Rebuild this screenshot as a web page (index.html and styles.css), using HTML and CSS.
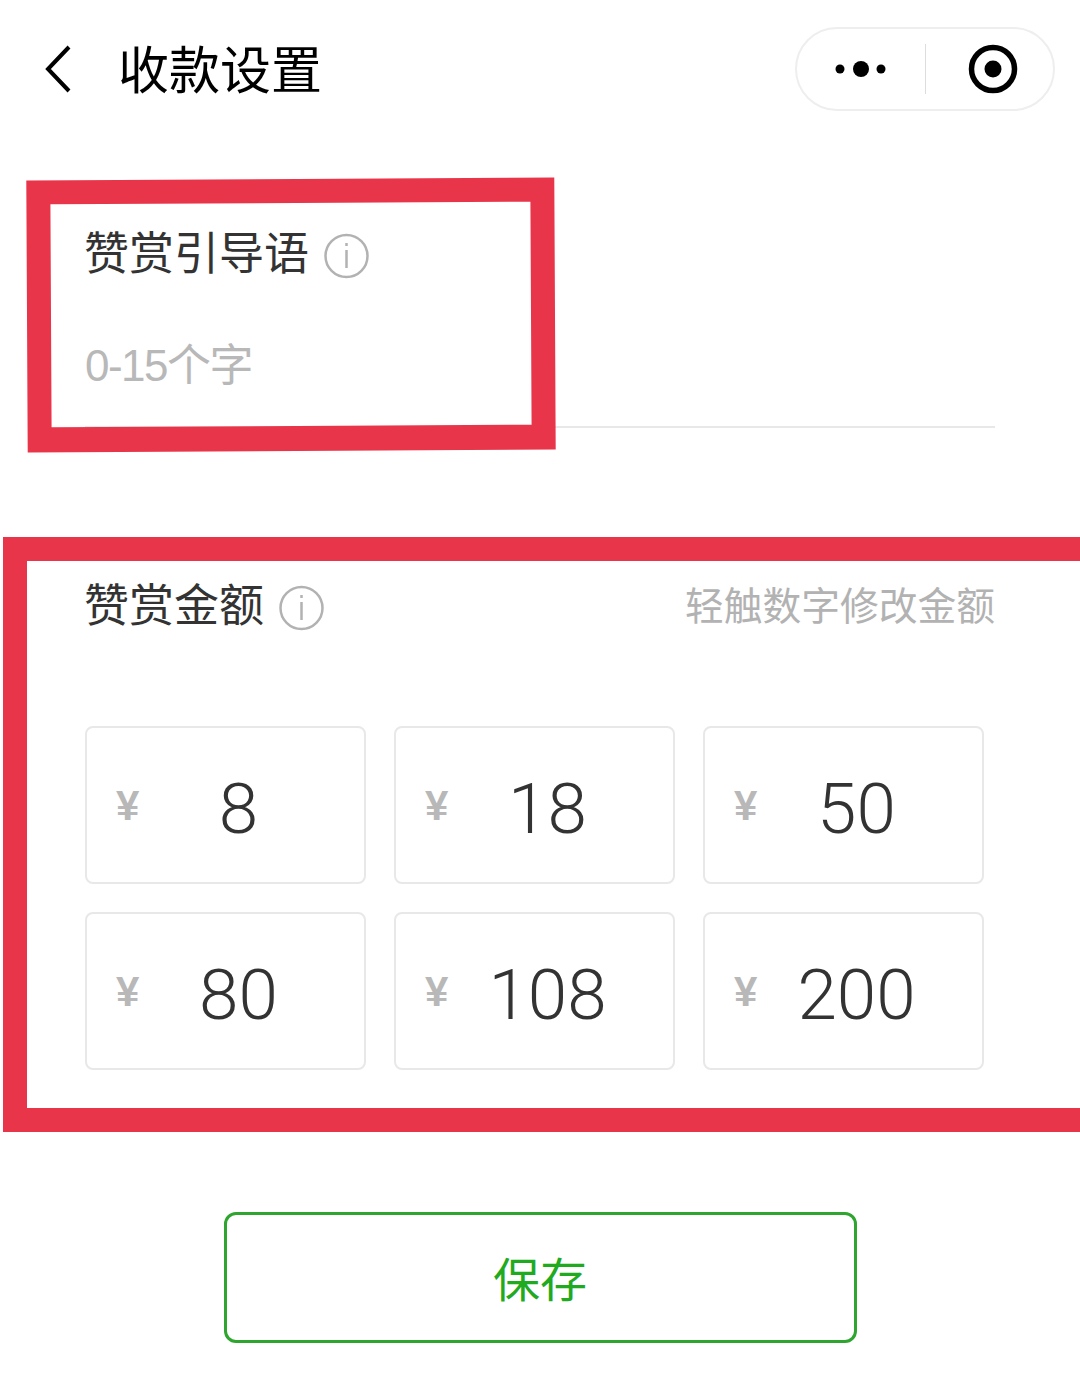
FILE: index.html
```html
<!DOCTYPE html>
<html lang="zh-CN">

<head>
    <meta charset="UTF-8">
    <meta name="viewport" content="width=device-width, initial-scale=1.0">
    <title>收款设置</title>
    <link rel="stylesheet" href="styles.css">
</head>

<body>
    <div class="header">
        <svg class="back" width="26" height="48" viewBox="0 0 26 48">
            <path d="M24 2 L3 24 L24 46" fill="none" stroke="#000" stroke-width="4" />
        </svg>
        <div class="title">收款设置</div>
        <div class="capsule">
            <div class="capsule-more">
                <svg width="54" height="20" viewBox="0 0 54 20">
                    <circle cx="6" cy="10" r="4.5" />
                    <circle cx="27" cy="10" r="8" />
                    <circle cx="47" cy="10" r="4.5" />
                </svg>
            </div>
            <div class="capsule-line"></div>
            <div class="capsule-target">
                <svg width="50" height="50" viewBox="0 0 50 50">
                    <circle cx="25" cy="25" r="21.5" fill="none" stroke="#000" stroke-width="5.5" />
                    <circle cx="25" cy="25" r="8.5" />
                </svg>
            </div>
        </div>
    </div>

    <div class="guide">
        <div class="label">
            赞赏引导语
            <svg class="info" width="45" height="46" viewBox="0 0 45 46">
                <circle cx="22.5" cy="23" r="21" />
                <path d="M22.5 17 V35 M22.5 10 V13" />
            </svg>
        </div>
        <div class="placeholder">0-15个字</div>
    </div>

    <div class="amount">
        <div class="amount-head">
            <div class="label">
                赞赏金额
                <svg class="info" width="45" height="46" viewBox="0 0 45 46">
                    <circle cx="22.5" cy="23" r="21" />
                    <path d="M22.5 17 V35 M22.5 10 V13" />
                </svg>
            </div>
            <div class="hint">轻触数字修改金额</div>
        </div>
        <ul class="amount-list">
            <li class="cell"><span class="yen">¥</span><span class="num">8</span></li>
            <li class="cell"><span class="yen">¥</span><span class="num">18</span></li>
            <li class="cell"><span class="yen">¥</span><span class="num">50</span></li>
            <li class="cell"><span class="yen">¥</span><span class="num">80</span></li>
            <li class="cell"><span class="yen">¥</span><span class="num">108</span></li>
            <li class="cell"><span class="yen">¥</span><span class="num">200</span></li>
        </ul>
    </div>

    <div class="save">保存</div>

    <!-- 红色标注框 -->
    <div class="mark mark-guide"></div>
    <div class="mark mark-amount"></div>
</body>

</html>
```

FILE: styles.css
```css
* {
    margin: 0;
    padding: 0;
    box-sizing: border-box;
}

ul {
    list-style: none;
}

body {
    position: relative;
    width: 1080px;
    height: 1374px;
    overflow: hidden;
    background-color: #fff;
    font-family: "Liberation Sans", "Noto Sans CJK SC", sans-serif;
}

.header {
    display: flex;
    align-items: center;
    height: 84px;
    margin-top: 27px;
    padding: 0 25px 0 45px;
}

.back {
    margin-top: -1px;
}

.title {
    flex: 1;
    margin-left: 47px;
    padding-top: 6px;
    font-size: 51px;
    line-height: 84px;
    color: #000;
}

.capsule {
    display: flex;
    align-items: center;
    width: 260px;
    height: 84px;
    border: 2px solid #eee;
    border-radius: 42px;
}

.capsule-more {
    width: 128px;
    display: flex;
    justify-content: center;
    align-items: center;
}

.capsule-target {
    flex: 1;
    display: flex;
    justify-content: center;
    align-items: center;
    padding-left: 7px;
}

.capsule-line {
    width: 1px;
    height: 50px;
    background-color: #ddd;
}

.guide {
    height: 200px;
    margin: 117px 85px 0;
    border-bottom: 2px solid #e8e8e8;
}

.label {
    display: flex;
    align-items: center;
    gap: 15px;
    height: 54px;
    margin-left: -1px;
    font-size: 45px;
    line-height: 54px;
    color: #333;
}

.info {
    margin-top: 2px;
    fill: none;
    stroke: #b2b2b2;
    stroke-width: 2.5;
}

.placeholder {
    margin-top: 57px;
    font-size: 44px;
    line-height: 54px;
    letter-spacing: -1.5px;
    color: #b8b8b8;
}

.amount {
    margin: 152px 85px 0;
}

.amount-head {
    display: flex;
    justify-content: space-between;
    align-items: center;
}

.hint {
    margin-top: -8px;
    font-size: 38.75px;
    color: #b2b2b2;
}

.amount-list {
    display: grid;
    grid-template-columns: repeat(3, 281px);
    grid-auto-rows: 158px;
    gap: 28px;
    margin-top: 92px;
}

.cell {
    display: flex;
    align-items: center;
    border: 2px solid #e8e8e8;
    border-radius: 8px;
    color: #333;
}

.yen {
    width: 54px;
    margin-top: 2px;
    padding-left: 29px;
    font-size: 42px;
    font-weight: bold;
    color: #b8b8b8;
}

.num {
    flex: 1;
    margin-top: 6px;
    padding-right: 28px;
    font-family: Roboto, "Liberation Sans", sans-serif;
    font-size: 71px;
    font-weight: 300;
    text-align: center;
}

.save {
    width: 633px;
    height: 131px;
    margin: 142px auto 0;
    border: 3px solid #2ea52e;
    border-radius: 12px;
    font-size: 47px;
    line-height: 131px;
    text-align: center;
    color: #1faa1f;
}

/* 标注框盖在内容上面 */
.mark {
    position: absolute;
    border: 24px solid #e93549;
}

.mark-guide {
    left: 27px;
    top: 179px;
    width: 528px;
    height: 272px;
    border-bottom-width: 25px;
    transform: rotate(-0.3deg);
}

.mark-amount {
    left: 3px;
    top: 537px;
    width: 1120px;
    height: 595px;
}
```
